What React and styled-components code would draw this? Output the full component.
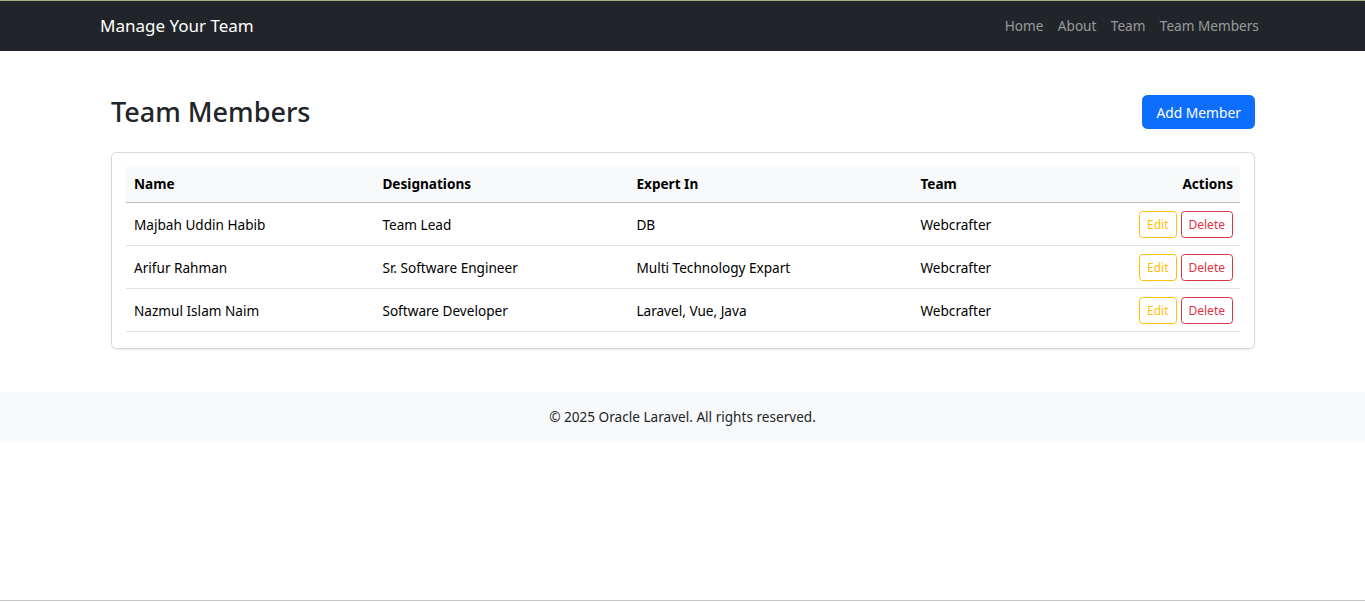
import React from 'react';
import styled, { createGlobalStyle } from 'styled-components';

const GlobalStyle = createGlobalStyle`
    *, *::before, *::after{
        box-sizing: border-box;
    }
    body{
        margin: 0;
        font-family: "Noto Sans", "Open Sans", sans-serif;
        font-size: 13.6px;
        color: #212529;
        background: #fff;
    }
`;

const members = [
    { name: 'Majbah Uddin Habib', designation: 'Team Lead', expert: 'DB', team: 'Webcrafter' },
    { name: 'Arifur Rahman', designation: 'Sr. Software Engineer', expert: 'Multi Technology Expart', team: 'Webcrafter' },
    { name: 'Nazmul Islam Naim', designation: 'Software Developer', expert: 'Laravel, Vue, Java', team: 'Webcrafter' },
];

function App() {
    return (
        <PageStyled>
            <GlobalStyle />
            <Navbar>
                <NavInner>
                    <Brand href="#">Manage Your Team</Brand>
                    <NavLinks>
                        <NavLink href="#">Home</NavLink>
                        <NavLink href="#">About</NavLink>
                        <NavLink href="#">Team</NavLink>
                        <NavLink href="#">Team Members</NavLink>
                    </NavLinks>
                </NavInner>
            </Navbar>
            <Main>
                <PageHeader>
                    <Title>Team Members</Title>
                    <PrimaryButton>Add Member</PrimaryButton>
                </PageHeader>
                <Card>
                    <Table>
                        <thead>
                            <tr>
                                <Th style={{ width: '22.3%' }}>Name</Th>
                                <Th style={{ width: '22.8%' }}>Designations</Th>
                                <Th style={{ width: '25.5%' }}>Expert In</Th>
                                <Th>Team</Th>
                                <Th $right>Actions</Th>
                            </tr>
                        </thead>
                        <tbody>
                            {members.map((m) => (
                                <tr key={m.name}>
                                    <Td>{m.name}</Td>
                                    <Td>{m.designation}</Td>
                                    <Td>{m.expert}</Td>
                                    <Td>{m.team}</Td>
                                    <Td $right>
                                        <Actions>
                                            <OutlineButton $color="#ffc107">Edit</OutlineButton>
                                            <OutlineButton $color="#dc3545">Delete</OutlineButton>
                                        </Actions>
                                    </Td>
                                </tr>
                            ))}
                        </tbody>
                    </Table>
                </Card>
            </Main>
            <Footer>© 2025 Oracle Laravel. All rights reserved.</Footer>
        </PageStyled>
    );
}

const PageStyled = styled.div`
    min-height: 601px;
    border-bottom: 1px solid #c6c6c6;
`;

const Navbar = styled.nav`
    background: #212529;
    border-top: 1px solid #9fb38f;
    height: 51px;
`;

const NavInner = styled.div`
    display: flex;
    align-items: center;
    justify-content: space-between;
    height: 100%;
    padding: 0 99px 0 100px;
`;

const Brand = styled.a`
    color: #fff;
    font-size: 17px;
    text-decoration: none;
    margin-top: -1px;
`;

const NavLinks = styled.div`
    display: flex;
    margin-top: -2px;
`;

const NavLink = styled.a`
    color: rgba(255, 255, 255, 0.55);
    text-decoration: none;
    font-size: 13.6px;
    padding: 7px 7.2px;
`;

const Main = styled.main`
    padding: 44px 110px 0 111px;
`;

const PageHeader = styled.div`
    display: flex;
    align-items: center;
    justify-content: space-between;
    height: 34px;
    margin-bottom: 23px;
`;

const Title = styled.h2`
    margin: 0;
    font-size: 27px;
    font-weight: 500;
    line-height: 1.2;
    color: #212529;
`;

const PrimaryButton = styled.button`
    font-family: inherit;
    font-size: 13.8px;
    color: #fff;
    background: #0d6efd;
    border: 1px solid #0d6efd;
    border-radius: 5.4px;
    height: 34px;
    padding: 0 13px;
`;

const Card = styled.div`
    border: 1px solid #d6d8db;
    border-radius: 5.4px;
    box-shadow: 0 1px 2px rgba(0, 0, 0, 0.075);
    padding: 13px 14px 16px 14px;
`;

const Table = styled.table`
    width: 100%;
    border-collapse: collapse;
    font-size: 13.6px;
    color: #000;
`;

const Th = styled.th`
    background: #f8f9fa;
    font-weight: 700;
    text-align: ${(p) => (p.$right ? 'right' : 'left')};
    padding: 0 7px 0 8px;
    height: 36px;
    border-bottom: 1px solid #b9bcc0;
`;

const Td = styled.td`
    text-align: ${(p) => (p.$right ? 'right' : 'left')};
    padding: 1px 7px 0 8px;
    height: 43px;
    border-bottom: 1px solid #dee2e6;
`;

const Actions = styled.div`
    display: inline-flex;
    gap: 4px;
    vertical-align: middle;
`;

const OutlineButton = styled.button`
    font-family: inherit;
    font-size: 12px;
    color: ${(p) => p.$color};
    background: transparent;
    border: 1px solid ${(p) => p.$color};
    border-radius: 3.6px;
    height: 27px;
    padding: 0 7px;
`;

const Footer = styled.footer`
    margin-top: 43px;
    background: #f8f9fa;
    height: 50px;
    display: flex;
    align-items: center;
    justify-content: center;
    font-size: 13.6px;
    color: #212529;
`;

export default App;
